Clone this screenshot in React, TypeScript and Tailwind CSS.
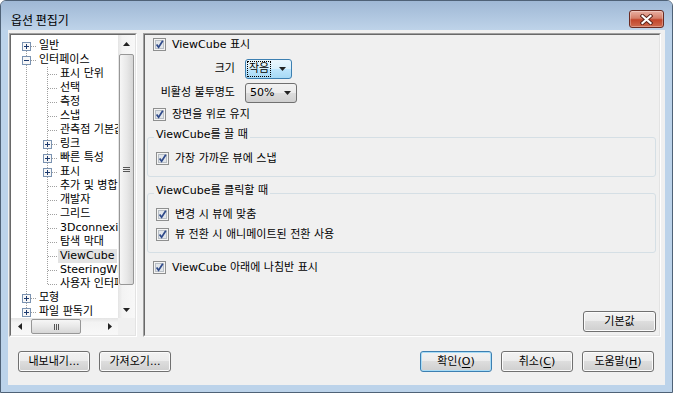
import React from "react";

const FONT = "font-['DejaVu_Sans','Noto_Sans_CJK_KR',sans-serif]";

function CheckBox() {
  return (
    <svg width="13" height="13" viewBox="0 0 13 13" className="block shrink-0">
      <rect x="0.5" y="0.5" width="12" height="12" fill="#f4f4f4" stroke="#8e8f8f" />
      <rect x="2.5" y="2.5" width="8" height="8" fill="#e2e6ea" stroke="#b9bfc6" />
      <path d="M3.6 6.4 L5.6 9.2 L9.8 2.8" fill="none" stroke="#2f4a8a" strokeWidth="1.7" />
    </svg>
  );
}

function CheckRow({ label, className }: { label: string; className: string }) {
  return (
    <div className={`flex items-center h-[13px] ${className}`}>
      <CheckBox />
      <span className="ml-[6px] whitespace-nowrap">{label}</span>
    </div>
  );
}

type V = "full" | "top" | "bottom" | "none";

function TreeCell({ v, h, box }: { v: V; h?: boolean; box?: "+" | "-" }) {
  const dot = { stroke: "#a0a0a0", strokeDasharray: "1 1" };
  return (
    <svg width="21" height="14" viewBox="0 0 21 14" className="block shrink-0">
      {v === "full" && <line x1="10.5" y1="0" x2="10.5" y2="14" {...dot} />}
      {v === "top" && <line x1="10.5" y1="0" x2="10.5" y2="8" {...dot} />}
      {v === "bottom" && <line x1="10.5" y1="8" x2="10.5" y2="14" {...dot} />}
      {h && <line x1="11" y1="7.5" x2="21" y2="7.5" {...dot} />}
      {box && (
        <g>
          <rect x="6.5" y="3.5" width="8" height="8" fill="#f7f7f7" stroke="#7b93b1" />
          <line x1="8" y1="7.5" x2="13" y2="7.5" stroke="#1d3a6e" />
          {box === "+" && <line x1="10.5" y1="5" x2="10.5" y2="10" stroke="#1d3a6e" />}
        </g>
      )}
    </svg>
  );
}

type Node = {
  t: string;
  l: 1 | 2;
  v1: V;
  box1?: "+" | "-";
  v2?: V;
  box2?: "+" | "-";
  sel?: boolean;
};

const tree: Node[] = [
  { t: "일반", l: 1, v1: "bottom", box1: "+" },
  { t: "인터페이스", l: 1, v1: "full", box1: "-" },
  { t: "표시 단위", l: 2, v1: "full", v2: "full" },
  { t: "선택", l: 2, v1: "full", v2: "full" },
  { t: "측정", l: 2, v1: "full", v2: "full" },
  { t: "스냅", l: 2, v1: "full", v2: "full" },
  { t: "관측점 기본값", l: 2, v1: "full", v2: "full" },
  { t: "링크", l: 2, v1: "full", v2: "full", box2: "+" },
  { t: "빠른 특성", l: 2, v1: "full", v2: "full", box2: "+" },
  { t: "표시", l: 2, v1: "full", v2: "full", box2: "+" },
  { t: "추가 및 병합", l: 2, v1: "full", v2: "full" },
  { t: "개발자", l: 2, v1: "full", v2: "full" },
  { t: "그리드", l: 2, v1: "full", v2: "full" },
  { t: "3Dconnexion", l: 2, v1: "full", v2: "full" },
  { t: "탐색 막대", l: 2, v1: "full", v2: "full" },
  { t: "ViewCube", l: 2, v1: "full", v2: "full", sel: true },
  { t: "SteeringWheels", l: 2, v1: "full", v2: "full" },
  { t: "사용자 인터페이스", l: 2, v1: "full", v2: "top" },
  { t: "모형", l: 1, v1: "full", box1: "+" },
  { t: "파일 판독기", l: 1, v1: "top", box1: "+" },
];

function Tri({ dir }: { dir: "up" | "down" | "left" | "right" }) {
  if (dir === "up")
    return (
      <svg width="7" height="4" viewBox="0 0 7 4" className="block">
        <path d="M0 4 L3.5 0 L7 4 Z" fill="#222" />
      </svg>
    );
  if (dir === "down")
    return (
      <svg width="7" height="4" viewBox="0 0 7 4" className="block">
        <path d="M0 0 L7 0 L3.5 4 Z" fill="#222" />
      </svg>
    );
  if (dir === "left")
    return (
      <svg width="4" height="7" viewBox="0 0 4 7" className="block">
        <path d="M4 0 L4 7 L0 3.5 Z" fill="#222" />
      </svg>
    );
  return (
    <svg width="4" height="7" viewBox="0 0 4 7" className="block">
      <path d="M0 0 L0 7 L4 3.5 Z" fill="#222" />
    </svg>
  );
}

function VScroll() {
  return (
    <div className="w-[17px] shrink-0 flex flex-col bg-[linear-gradient(90deg,#e4e4e4,#f3f3f3_25%,#f8f8f8)]">
      <div className="h-[17px] shrink-0 flex items-center justify-center">
        <Tri dir="up" />
      </div>
      <div className="flex-1 flex flex-col pt-[2px]">
        <div className="mx-[1px] h-[231px] rounded-[2px] border border-[#979797] bg-[linear-gradient(90deg,#f6f6f6,#e8e8e8_50%,#d6d6d6)] flex flex-col items-center justify-center gap-[1px]">
          <div className="w-[7px] h-[1px] bg-[#555]" />
          <div className="w-[7px] h-[1px] bg-[#555]" />
          <div className="w-[7px] h-[1px] bg-[#555]" />
        </div>
      </div>
      <div className="h-[17px] shrink-0 flex items-center justify-center">
        <Tri dir="down" />
      </div>
    </div>
  );
}

function HScroll() {
  return (
    <div className="flex-1 flex bg-[linear-gradient(#e4e4e4,#f3f3f3_25%,#f8f8f8)]">
      <div className="w-[17px] shrink-0 flex items-center justify-center">
        <Tri dir="left" />
      </div>
      <div className="flex-1 flex items-stretch py-[1px] pl-[3px]">
        <div className="w-[50px] rounded-[2px] border border-[#979797] bg-[linear-gradient(#f6f6f6,#e8e8e8_50%,#d6d6d6)] flex items-center justify-center gap-[1px]">
          <div className="w-[1px] h-[6px] bg-[#555]" />
          <div className="w-[1px] h-[6px] bg-[#555]" />
          <div className="w-[1px] h-[6px] bg-[#555]" />
        </div>
      </div>
      <div className="w-[17px] shrink-0 flex items-center justify-center">
        <Tri dir="right" />
      </div>
    </div>
  );
}

function TreePanel() {
  return (
    <div className="w-[128px] shrink-0 border border-t-[#a0a0a0] border-l-[#a0a0a0] border-b-white border-r-white">
      <div className="h-full border border-t-[#696969] border-l-[#696969] border-b-[#e3e3e3] border-r-[#e3e3e3] bg-white flex flex-col">
        <div className="flex flex-1 min-h-0">
          <div className="flex-1 min-w-0 overflow-hidden pt-[4px] pl-[5px]">
            {tree.map((n, i) => (
              <div key={i} className="flex items-center h-[14px] whitespace-nowrap">
                {n.l === 1 ? (
                  <TreeCell v={n.v1} h box={n.box1} />
                ) : (
                  <>
                    <TreeCell v={n.v1} />
                    <TreeCell v={n.v2 ?? "full"} h box={n.box2} />
                  </>
                )}
                <span className={`px-[2px] leading-[14px] ${n.sel ? "bg-[#e3e3e3]" : ""}`}>{n.t}</span>
              </div>
            ))}
          </div>
          <VScroll />
        </div>
        <div className="flex h-[17px] shrink-0">
          <HScroll />
          <div className="w-[17px] shrink-0 bg-[#f0f0f0]" />
        </div>
      </div>
    </div>
  );
}

function Combo({ text, focus, w }: { text: string; focus?: boolean; w: string }) {
  return (
    <div
      className={`h-[20px] ${w} rounded-[3px] border flex items-center justify-between pl-[2px] pr-[5px] ${
        focus
          ? "border-[#3c7fb1] bg-[linear-gradient(#eaf6fd_0%,#d9f0fc_50%,#bee6fd_50%,#a7d9f5_100%)]"
          : "border-[#707070] bg-[linear-gradient(#f2f2f2_0%,#ebebeb_50%,#dddddd_50%,#cfcfcf_100%)]"
      }`}
    >
      <span className={`px-[1px] leading-[14px] ${focus ? "outline outline-1 outline-dotted outline-black" : "pl-[2px]"}`}>{text}</span>
      <Tri dir="down" />
    </div>
  );
}

function Btn({ children, def, className }: { children: React.ReactNode; def?: boolean; className?: string }) {
  return (
    <div
      className={`w-[72px] h-[21px] shrink-0 rounded-[3px] border flex items-center justify-center bg-[linear-gradient(#f2f2f2_0%,#ebebeb_50%,#dddddd_50%,#cfcfcf_100%)] ${
        def ? "border-[#3c7fb1] shadow-[inset_0_0_0_1px_#a9dcf6]" : "border-[#707070] shadow-[inset_0_0_0_1px_#fbfbfb]"
      } ${className ?? ""}`}
    >
      <span className="leading-[14px] whitespace-nowrap">{children}</span>
    </div>
  );
}

function Group({ title, children, className }: { title: string; children: React.ReactNode; className: string }) {
  return (
    <div className={`ml-[2px] rounded-[3px] border border-[#d5dfe5] pb-[11px] ${className}`}>
      <div className="-mt-[10px] ml-[6px] px-[2px] w-fit bg-[#f0f0f0] h-[14px] leading-[14px] whitespace-nowrap">{title}</div>
      {children}
    </div>
  );
}

function RightPanel() {
  return (
    <div className="flex-1 border border-t-[#a0a0a0] border-l-[#a0a0a0] border-b-white border-r-white">
      <div className="h-full border border-t-[#696969] border-l-[#696969] border-b-[#e3e3e3] border-r-[#e3e3e3] bg-[#f0f0f0] flex flex-col pr-[3px] pb-[3px]">
        <CheckRow label="ViewCube 표시" className="mt-[3px] pl-[8px]" />
        <div className="mt-[8px] flex items-center h-[20px] pl-[8px]">
          <div className="w-[82px] text-right">크기</div>
          <div className="ml-[10px]">
            <Combo text="작음" focus w="w-[47px]" />
          </div>
        </div>
        <div className="mt-[4px] flex items-center h-[20px] pl-[8px]">
          <div className="w-[82px] text-right whitespace-nowrap">비활성 불투명도</div>
          <div className="ml-[10px]">
            <Combo text="50%" w="w-[52px]" />
          </div>
        </div>
        <CheckRow label="장면을 위로 유지" className="mt-[5px] pl-[8px]" />
        <Group title="ViewCube를 끌 때" className="mt-[16px]">
          <CheckRow label="가장 가까운 뷰에 스냅" className="mt-[10px] pl-[8px]" />
        </Group>
        <Group title="ViewCube를 클릭할 때" className="mt-[16px]">
          <CheckRow label="변경 시 뷰에 맞춤" className="mt-[10px] pl-[8px]" />
          <CheckRow label="뷰 전환 시 애니메이트된 전환 사용" className="mt-[7px] pl-[8px]" />
        </Group>
        <CheckRow label="ViewCube 아래에 나침반 표시" className="mt-[8px] pl-[8px]" />
        <div className="mt-auto flex justify-end">
          <Btn className="w-[73px]">기본값</Btn>
        </div>
      </div>
    </div>
  );
}

function CloseBtn() {
  return (
    <div className="mt-[9px] mr-[8px] w-[35px] h-[18px] rounded-[3px] border border-[#6b2b22] bg-[linear-gradient(#e9b0a3,#d57f6a_45%,#c2452b_55%,#cf6a4e)] shadow-[inset_0_0_0_1px_rgba(255,255,255,0.3)] flex items-center justify-center">
      <svg width="13" height="11" viewBox="0 0 13 11" className="block">
        <path d="M2.5 2 L10.5 9 M10.5 2 L2.5 9" stroke="#5a2219" strokeWidth="4" strokeLinecap="square" />
        <path d="M2.5 2 L10.5 9 M10.5 2 L2.5 9" stroke="#ffffff" strokeWidth="2.2" strokeLinecap="square" />
      </svg>
    </div>
  );
}

export default function App() {
  return (
    <div className={`w-[673px] h-[393px] ${FONT} text-[11px] leading-[14px] text-black overflow-hidden`}>
      <div className="w-full h-full flex flex-col border border-[#4f6277] rounded-t-[6px] bg-[#bcd3ea]">
        <div className="h-[29px] shrink-0 flex items-start justify-between bg-[linear-gradient(#9fb8d5,#bed3e9)] rounded-t-[5px]">
          <div className="ml-[10px] mt-[11px] text-[12px] leading-[15px] font-['Noto_Sans_CJK_KR',sans-serif]">옵션 편집기</div>
          <CloseBtn />
        </div>
        <div className="mx-[7px] h-[355px] shrink-0 bg-[#f0f0f0] flex flex-col pt-[3px] pl-[1px] pr-[4px]">
          <div className="flex gap-[6px] h-[304px] shrink-0">
            <TreePanel />
            <RightPanel />
          </div>
          <div className="mt-[14px] flex h-[21px] pl-[9px] pr-[7px]">
            <Btn>내보내기...</Btn>
            <Btn className="ml-[9px]">가져오기...</Btn>
            <div className="flex-1" />
            <Btn def>
              확인(<span className="underline underline-offset-[2px]">O</span>)
            </Btn>
            <Btn className="ml-[9px]">
              취소(<span className="underline underline-offset-[2px]">C</span>)
            </Btn>
            <Btn className="ml-[9px]">
              도움말(<span className="underline underline-offset-[2px]">H</span>)
            </Btn>
          </div>
        </div>
      </div>
    </div>
  );
}
